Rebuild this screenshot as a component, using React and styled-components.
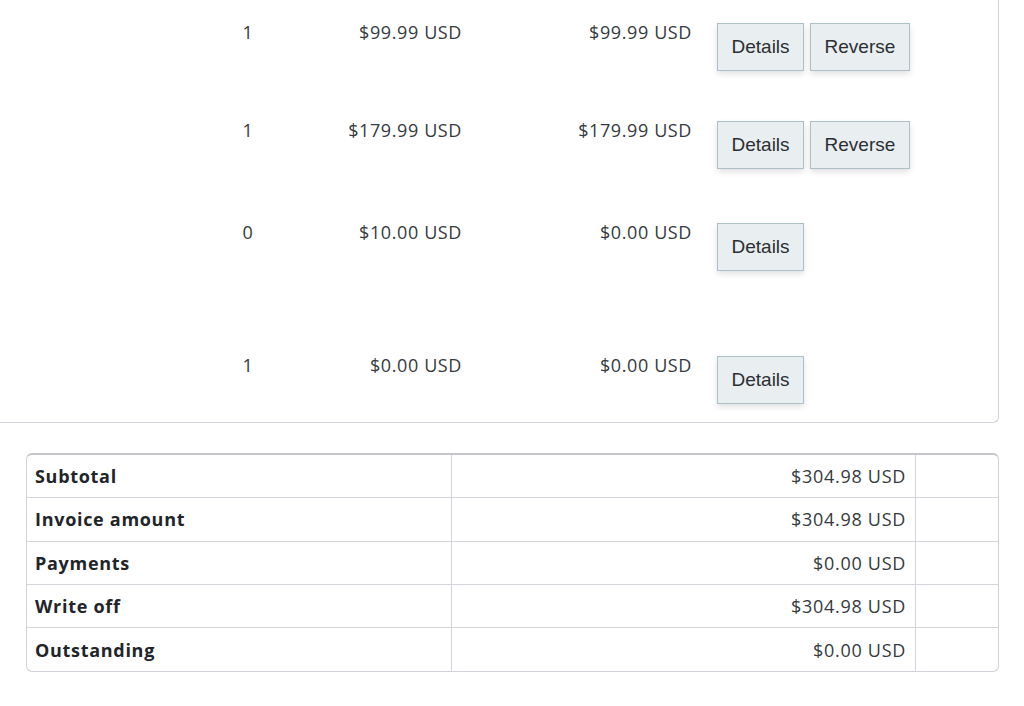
import styled, { createGlobalStyle } from 'styled-components';

const GlobalStyle = createGlobalStyle`
  body {
    margin: 0;
    background: #fff;
    font-family: "Open Sans", "Noto Sans", sans-serif;
    color: #212529;
  }
`

const Page = styled.div`
  width: 1024px;
  height: 706px;
  overflow: hidden;
  padding-right: 25px;
  box-sizing: border-box;
`

const Card = styled.div`
  background: #fff;
  border: 1px solid #cfd2d6;
  border-top: none;
  border-left: none;
  border-bottom-right-radius: 6px;
  padding-top: 8px;
`

const Row = styled.div`
  display: grid;
  grid-template-columns: 230px 36px 208px 230px 1fr;
  height: ${(p) => p.$h}px;
  box-sizing: border-box;
`

const Cell = styled.div`
  padding: 12px 12px 0 0;
  font-size: 18px;
  line-height: 24px;
  letter-spacing: 0.6px;
  color: #343a40;
  text-align: ${(p) => p.$align || 'right'};
`

const Qty = styled(Cell)`
  padding-right: 0;
  text-align: center;
`

const Actions = styled.div`
  display: flex;
  align-items: flex-start;
  gap: 6px;
  padding: 15px 0 0 13px;
`

const ActionButton = styled.button`
  height: 48px;
  padding: 0 13.5px;
  background: #e9eef1;
  border: 1px solid #adbfc8;
  border-radius: 0;
  box-shadow: 0 3px 6px rgba(0, 0, 0, 0.12);
  font-family: "Liberation Sans", Arial, sans-serif;
  font-size: 19px;
  color: #2b2f33;
  cursor: pointer;
`

const Totals = styled.table`
  margin: 30px 0 0 26px;
  width: 973px;
  border-collapse: separate;
  border-spacing: 0;
  border: 1px solid #cfd2d8;
  border-top: 2px solid #c4c6cc;
  border-radius: 6px;
  font-size: 18px;
  letter-spacing: 0.7px;
`

const Td = styled.td`
  height: 43.3px;
  padding: 0 9px 0 8px;
  box-sizing: border-box;
  border-bottom: ${(p) => (p.$last ? 'none' : '1px solid #d3d5db')};
  border-left: ${(p) => (p.$first ? 'none' : '1px solid #d3d5db')};
  text-align: ${(p) => p.$align || 'left'};
  font-weight: ${(p) => (p.$bold ? 700 : 400)};
  color: ${(p) => (p.$bold ? '#212529' : '#343a40')};
  width: ${(p) => p.$w || 'auto'};
`

const items = [
  { qty: 1, price: '$99.99 USD', total: '$99.99 USD', reverse: true, h: 98 },
  { qty: 1, price: '$179.99 USD', total: '$179.99 USD', reverse: true, h: 102 },
  { qty: 0, price: '$10.00 USD', total: '$0.00 USD', reverse: false, h: 133 },
  { qty: 1, price: '$0.00 USD', total: '$0.00 USD', reverse: false, h: 81 },
]

const totals = [
  ['Subtotal', '$304.98 USD'],
  ['Invoice amount', '$304.98 USD'],
  ['Payments', '$0.00 USD'],
  ['Write off', '$304.98 USD'],
  ['Outstanding', '$0.00 USD'],
]

export default function App() {
  return (
    <Page>
      <GlobalStyle />
      <Card>
        {items.map((item, i) => (
          <Row key={i} $h={item.h}>
            <div />
            <Qty>{item.qty}</Qty>
            <Cell>{item.price}</Cell>
            <Cell>{item.total}</Cell>
            <Actions>
              <ActionButton>Details</ActionButton>
              {item.reverse && <ActionButton>Reverse</ActionButton>}
            </Actions>
          </Row>
        ))}
      </Card>
      <Totals>
        <tbody>
          {totals.map(([label, value], i) => (
            <tr key={label}>
              <Td $first $bold $w="424px" $last={i === totals.length - 1}>{label}</Td>
              <Td $align="right" $w="464px" $last={i === totals.length - 1}>{value}</Td>
              <Td $last={i === totals.length - 1} />
            </tr>
          ))}
        </tbody>
      </Totals>
    </Page>
  );
}
